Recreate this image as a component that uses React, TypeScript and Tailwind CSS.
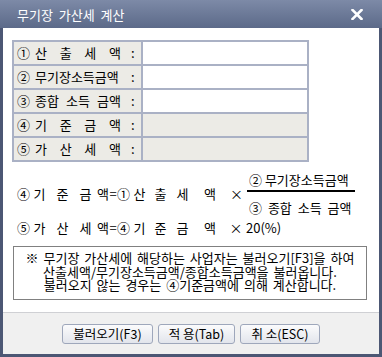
const FONT = "font-['Noto_Sans_CJK_KR','Noto_Sans',sans-serif]";

type Tok = [string, number];

const FORMULA_1: Tok[] = [
  ["④", 11],
  ["기", 23],
  ["준", 23],
  ["금", 23],
  ["액", 12],
  ["=", 8],
  ["①", 12],
  ["산", 21],
  ["출", 21],
  ["세", 23],
  ["액", 32],
  ["×", 21],
];

const FORMULA_2: Tok[] = [
  ["⑤", 11],
  ["가", 23],
  ["산", 23],
  ["세", 23],
  ["액", 12],
  ["=", 8],
  ["④", 12],
  ["기", 21],
  ["준", 21],
  ["금", 23],
  ["액", 32],
  ["×", 20],
];

const ROWS = [
  { no: "①", parts: ["산", "출", "세", "액"], shaded: false },
  { no: "②", parts: ["무기장소득금액"], shaded: false },
  { no: "③", parts: ["종합", "소득", "금액"], shaded: false },
  { no: "④", parts: ["기", "준", "금", "액"], shaded: true },
  { no: "⑤", parts: ["가", "산", "세", "액"], shaded: true },
];

function Tokens({ items }: { items: Tok[] }) {
  return (
    <>
      {items.map(([t, w], i) => (
        <span key={i} className="shrink-0 whitespace-nowrap text-center" style={{ width: w }}>
          {t}
        </span>
      ))}
    </>
  );
}

function CloseIcon() {
  return (
    <svg width="12" height="11" viewBox="0 0 12 11">
      <path d="M1.5 1 L10.5 10 M10.5 1 L1.5 10" stroke="white" strokeWidth="2.6" strokeLinecap="square" />
    </svg>
  );
}

function Button({ label, width }: { label: string; width: string }) {
  return (
    <button
      className={`${width} h-[20px] rounded-[3px] border border-[#9ea7bb] bg-gradient-to-b from-[#fbfbfc] to-[#e2e5ec] text-[12.5px] leading-none text-black`}
    >
      {label}
    </button>
  );
}

export default function App() {
  return (
    <div className={`${FONT} flex h-[357px] w-[382px] flex-col bg-[#4c5774] text-[13px] text-black`}>
      {/* title bar */}
      <div className="flex h-[28px] shrink-0 items-center justify-between bg-gradient-to-b from-[#7d8aa7] to-[#5c6a89] pl-[17px] pr-[19px]">
        <span className="text-[13px] leading-none text-white [word-spacing:3px]">무기장 가산세 계산</span>
        <CloseIcon />
      </div>

      <div className="mx-[3px] flex flex-col">
        {/* body */}
        <div className="flex h-[284px] flex-col bg-white pl-[9px] pt-[12px]">
          <div className="w-[297px] border-2 border-[#aab1c5]">
            {ROWS.map((row, i) => (
              <div
                key={row.no}
                className={`flex h-[22px] ${i < ROWS.length - 1 ? "box-content border-b-2 border-[#aab1c5]" : ""}`}
              >
                <div className="grid w-[127px] shrink-0 grid-cols-[21px_86px_20px] items-center whitespace-nowrap bg-[#ecebe6]">
                  <span className="pl-[3px]">{row.no}</span>
                  <span className="flex justify-between">
                    {row.parts.map((p) => (
                      <span key={p}>{p}</span>
                    ))}
                  </span>
                  <span className="pl-[10px]">:</span>
                </div>
                <div className={`flex-1 border-l-2 border-[#aab1c5] ${row.shaded ? "bg-[#ecebe6]" : "bg-white"}`} />
              </div>
            ))}
          </div>

          {/* formulas */}
          <div className="mt-[11px] flex items-center pl-[5px] leading-[14px]">
            <Tokens items={FORMULA_1} />
            <div className="flex w-[108px] flex-col whitespace-nowrap">
              <span className="h-[14px] pl-[2px]">② 무기장소득금액</span>
              <span className="mt-[3px] h-[2px] bg-black" />
              <span className="mt-[9px] h-[14px] pl-[2px] [word-spacing:3px]">③ 종합 소득 금액</span>
            </div>
          </div>
          <div className="mt-[6px] flex h-[14px] items-center pl-[5px] leading-[14px]">
            <Tokens items={FORMULA_2} />
            <span>20(%)</span>
          </div>

          {/* note */}
          <div className="ml-[1px] mt-[11px] h-[54px] w-[354px] border border-[#808080] pt-[4px] text-center leading-[13.5px] whitespace-nowrap [word-spacing:2px]">
            <div>※ 무기장 가산세에 해당하는 사업자는 불러오기[F3]을 하여</div>
            <div>산출세액/무기장소득금액/종합소득금액을 불러옵니다.</div>
            <div>불러오지 않는 경우는 ④기준금액에 의해 계산합니다.</div>
          </div>
        </div>

        {/* footer */}
        <div className="flex h-[42px] justify-center gap-[5px] border-t border-[#cfd0d4] bg-[#f0f0f0] pt-[11px]">
          <Button label="불러오기(F3)" width="w-[91px]" />
          <Button label="적 용(Tab)" width="w-[77px]" />
          <Button label="취 소(ESC)" width="w-[80px]" />
        </div>
      </div>
    </div>
  );
}
